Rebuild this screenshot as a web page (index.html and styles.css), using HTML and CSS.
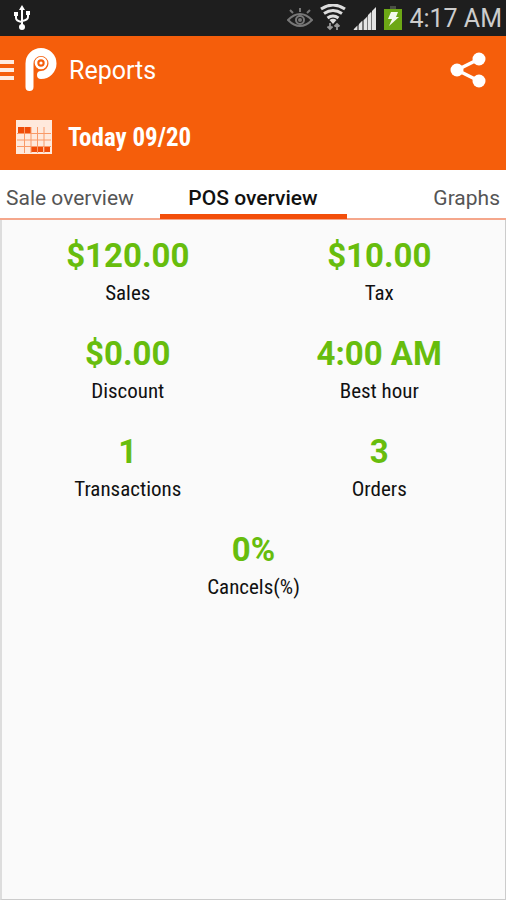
FILE: index.html
```html
<!DOCTYPE html>
<html lang="en">
  <head>
    <meta charset="utf-8">
    <meta name="viewport" content="width=device-width">
    <title>Reports</title>
    <link rel="stylesheet" href="styles.css">
  </head>
  <body>
    <div class="status-bar">
      <svg class="usb" width="18" height="26" viewBox="0 0 18 26" aria-hidden="true">
        <g fill="none" stroke="#fff" stroke-width="2">
          <path d="M9 3v19M3 9v4q0 3 6 4M15 8v4q0 3-6 4" />
        </g>
        <path d="M9 0l3 5H6zM1 7h4v4H1zM13 6h4v4h-4z" fill="#fff" />
        <circle cx="9" cy="22" r="3" fill="#fff" />
      </svg>
      <div class="status-icons">
        <svg width="26" height="28" viewBox="0 0 26 28" aria-hidden="true">
          <g fill="none" stroke="#777" stroke-width="2">
            <path d="M1 16q12-12 24 0q-12 12-24 0z" />
            <path d="M13 8V4M6 9L3 6M20 9l3-3" />
            <circle cx="13" cy="16" r="4" />
          </g>
          <circle cx="13" cy="16" r="2" fill="#777" />
        </svg>
        <svg class="wifi" width="26" height="28" viewBox="0 0 26 28" aria-hidden="true">
          <g fill="none" stroke="#ddd" stroke-width="3">
            <path d="M1 5q12-8 24 0M4 9.500q9-6 18 0M7.500 14q5.500-4 11 0" />
          </g>
          <path d="M9.500 16q3.500-2.500 7 0L13 20z" fill="#ddd" />
          <path d="M10 19v6M7.500 22.500L10 25l2.500-2.500M17 26v-6M14.500 22.500L17 20l2.500 2.500" fill="none" stroke="#999" stroke-width="1.800" />
        </svg>
        <svg width="24" height="28" viewBox="0 0 24 28" aria-hidden="true">
          <path d="M0 26L23 4v22z" fill="#777" />
          <path d="M1 26v-1l3-3v4zM6 26v-6l3-3v9zM11 26V16l3-3v13zM15 26V11l3-3v18zM19 26V7l4-4v23z" fill="#e4e4e4" />
        </svg>
        <svg class="battery" width="18" height="28" viewBox="0 0 18 28" aria-hidden="true">
          <path d="M6 2h6v3H6z" fill="#4a4f45" />
          <path d="M0 5h18v21H0z" fill="#6ca715" />
          <path d="M7 8h7l-2 5h3L5 22l3-7H4z" fill="#f5f9ee" />
        </svg>
        <time class="clock">4:17 AM</time>
      </div>
    </div>

    <header class="app-bar">
      <div class="title-row">
        <button class="menu" type="button" aria-label="Menu">
          <svg width="14" height="24" viewBox="0 0 14 24" aria-hidden="true">
            <path d="M0 2h14v4H0zM0 10h14v4H0zM0 18h14v4H0z" fill="#ffece0" />
          </svg>
        </button>
        <svg class="logo" width="32" height="46" viewBox="0 0 32 46" aria-hidden="true">
          <path d="M4.500 40V16.500a11.500 11.500 0 1 1 11.500 11.500" fill="none" stroke="#fff" stroke-width="8" stroke-linecap="round" />
          <circle cx="16" cy="16" r="5" fill="none" stroke="#fff" stroke-width="2.600" />
          <circle cx="16" cy="16" r="1.600" fill="#fff" />
        </svg>
        <h1>Reports</h1>
        <button class="share" type="button" aria-label="Share">
          <svg width="36" height="36" viewBox="0 0 36 36" aria-hidden="true">
            <path d="M29 7L7 18l22 11" fill="none" stroke="#fff" stroke-width="3.500" />
            <g fill="#fff">
              <circle cx="29" cy="7" r="6.500" />
              <circle cx="7" cy="18" r="6.500" />
              <circle cx="29" cy="29" r="6.500" />
            </g>
          </svg>
        </button>
      </div>
      <button class="date-row" type="button">
        <svg width="36" height="34" viewBox="0 0 36 34" aria-hidden="true">
          <path d="M0 0h36v34H0z" fill="#ffe9dc" />
          <path d="M2 7h6v6H2zM9 7h6v6H9zM15 27h6v5h-6zM22 27h5v5h-5zM28 27h6v5h-6z" fill="#f04c08" />
          <path d="M1 13.500h34M1 20h34M1 26.500h34M8.500 7v26M15 7v26M21.500 7v26M28 7v26" stroke="#f99a68" fill="none" />
        </svg>
        <span>Today 09/20</span>
      </button>
    </header>

    <nav class="tabs">
      <a href="#sale">Sale overview</a>
      <a class="active" href="#pos" aria-current="page">POS overview</a>
      <a href="#graphs">Graphs</a>
    </nav>

    <main id="pos">
      <dl class="metrics">
        <div class="metric">
          <dt>Sales</dt>
          <dd>$120.00</dd>
        </div>
        <div class="metric">
          <dt>Tax</dt>
          <dd>$10.00</dd>
        </div>
        <div class="metric">
          <dt>Discount</dt>
          <dd>$0.00</dd>
        </div>
        <div class="metric">
          <dt>Best hour</dt>
          <dd>4:00 AM</dd>
        </div>
        <div class="metric">
          <dt>Transactions</dt>
          <dd>1</dd>
        </div>
        <div class="metric">
          <dt>Orders</dt>
          <dd>3</dd>
        </div>
        <div class="metric wide">
          <dt>Cancels(%)</dt>
          <dd>0%</dd>
        </div>
      </dl>
    </main>
  </body>
</html>
```
FILE: styles.css
```css
* {
  box-sizing: border-box;
}

body {
  display: flex;
  flex-direction: column;
  min-height: 100vh;
  margin: 0;
  font-family: Roboto, sans-serif;
  color: #111;
  background-color: #fafafa;
}

button {
  padding: 0;
  border: 0;
  font: inherit;
  color: inherit;
  background: none;
}

svg {
  display: block;
  flex: none;
}

/* system status bar */
.status-bar {
  display: flex;
  align-items: center;
  justify-content: space-between;
  height: 36px;
  padding: 0 4px 0 13px;
  color: #ccc;
  background-color: #1e1e1e;
}

.status-icons {
  display: flex;
  align-items: center;
  gap: 7px;
}

.clock {
  padding-top: 2px;
  font-size: 25px;
  line-height: 34px;
}

/* app bar */
.app-bar {
  color: #fff;
  background-color: #f55e0b;
}

.title-row {
  display: flex;
  align-items: center;
  height: 68px;
  padding-right: 20px;
}

.logo {
  margin: 0 12px 0 11px;
}

h1 {
  flex: 1;
  margin: 0;
  font-size: 25px;
  font-weight: 400;
}

.date-row {
  display: flex;
  align-items: center;
  gap: 16px;
  width: 100%;
  height: 66px;
  padding-left: 16px;
  font-family: "Roboto Condensed", Roboto, sans-serif;
  font-size: 25px;
  font-weight: 700;
}

/* tabs */
.tabs {
  display: grid;
  grid-template-columns: 1fr 187px 1fr;
  height: 50px;
  border-bottom: 2px solid #f5a78c;
  background-color: #fff;
}

.tabs a {
  height: 49px;
  padding: 0 6px;
  font-size: 21px;
  line-height: 56px;
  color: #555;
  text-decoration: none;
  white-space: nowrap;
}

.tabs a:last-child {
  text-align: right;
}

.tabs .active {
  border-bottom: 5px solid #f34f0b;
  font-weight: 500;
  color: #111;
  text-align: center;
}

/* report figures */
main {
  flex: 1;
  border: 1px solid #ccc;
  border-top: 0;
  border-left: 2px solid #ddd;
}

.metrics {
  display: grid;
  grid-template-columns: 1fr 1fr;
  row-gap: 24px;
  margin: 0;
  padding-top: 16px;
}

.metric {
  display: flex;
  flex-direction: column-reverse;
  text-align: center;
}

.wide {
  grid-column: 1 / -1;
}

dt {
  font-family: "Roboto Condensed", Roboto, sans-serif;
  font-size: 21px;
  line-height: 34px;
}

dd {
  margin: 0;
  font-size: 33px;
  font-weight: 700;
  line-height: 40px;
  color: #67bd0d;
}
```
